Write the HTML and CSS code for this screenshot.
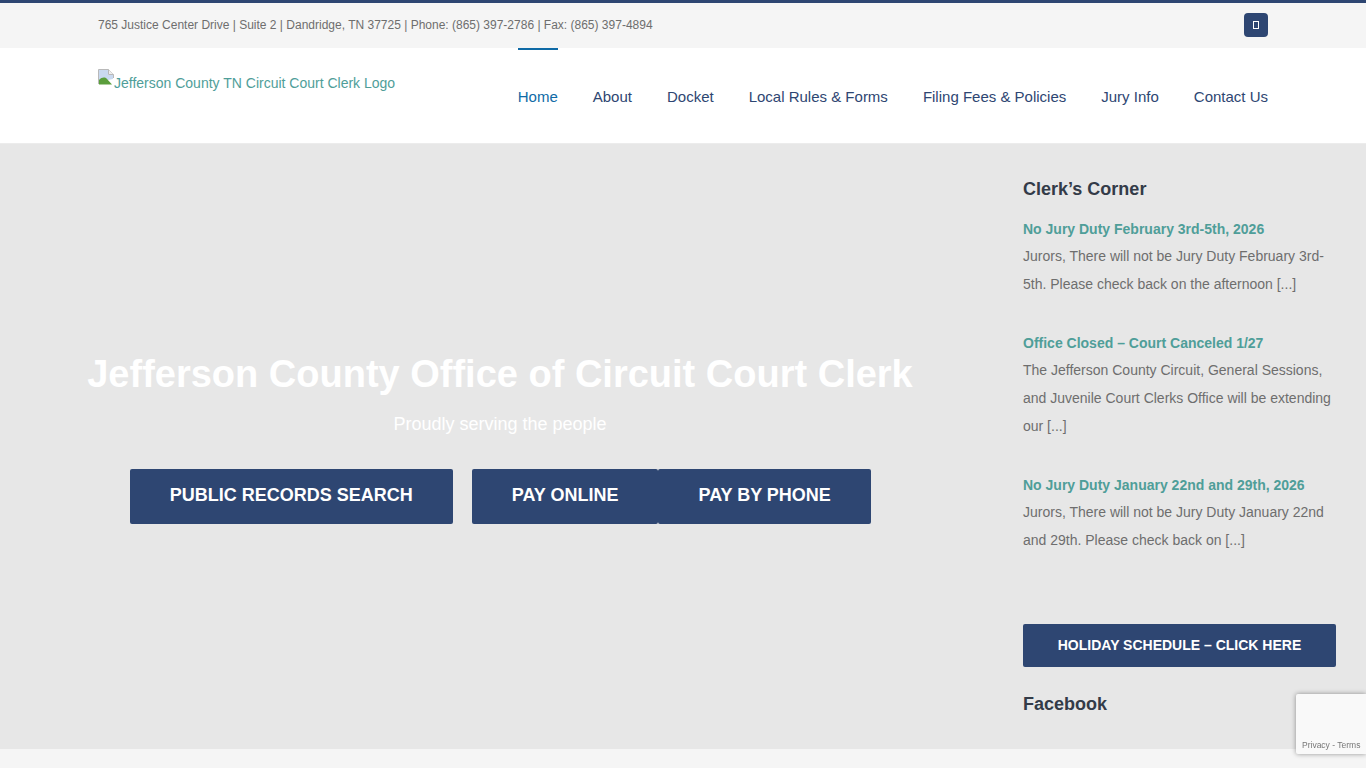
FILE: index.html
```html
<!DOCTYPE html>
<html lang="en">
<head>
    <meta charset="UTF-8">
    <title>Jefferson County TN Circuit Court Clerk</title>
    <meta name="viewport" content="width=device-width, initial-scale=1">
    <link rel="stylesheet" href="styles.css">
</head>
<body>
    <div class="top-bar">
        <div class="top-address">765 Justice Center Drive | Suite 2 | Dandridge, TN 37725 | Phone: (865) 397-2786 | Fax: (865) 397-4894</div>
        <a class="social-box" href="#"><span class="missing-glyph"></span></a>
    </div>

    <header class="site-header">
        <a class="logo" href="#">
            <svg class="broken-img" width="16" height="16" viewBox="0 0 16 16">
                <path d="M1 1H10V6H15V10L1 13Z" fill="#c9d9f0"/>
                <path d="M0.5 15V0.5H10.5L15.5 5.5V9" fill="none" stroke="#b9b9b9"/>
                <path d="M10.5 0.5V5.5H15.5" fill="#eee" stroke="#b9b9b9"/>
                <path d="M1 15.5V11C4 8 7 8 9 10L14 15.5Z" fill="#5b9e3c"/>
            </svg>Jefferson County TN Circuit Court Clerk Logo
        </a>
        <nav class="main-nav">
            <a class="nav-link active" href="#">Home</a>
            <a class="nav-link" href="#">About</a>
            <a class="nav-link" href="#">Docket</a>
            <a class="nav-link" href="#">Local Rules &amp; Forms</a>
            <a class="nav-link" href="#">Filing Fees &amp; Policies</a>
            <a class="nav-link" href="#">Jury Info</a>
            <a class="nav-link" href="#">Contact Us</a>
        </nav>
    </header>

    <div class="content">
        <main class="hero">
            <h1>Jefferson County Office of Circuit Court Clerk</h1>
            <p class="hero-sub">Proudly serving the people</p>
            <div class="hero-buttons">
                <a class="btn btn-search" href="#">PUBLIC RECORDS SEARCH</a>
                <a class="btn" href="#">PAY ONLINE</a>
                <a class="btn" href="#">PAY BY PHONE</a>
            </div>
        </main>

        <aside class="sidebar">
            <h2>Clerk’s Corner</h2>
            <div class="post">
                <a class="post-title" href="#">No Jury Duty February 3rd-5th, 2026</a>
                <p>Jurors, There will not be Jury Duty February 3rd-5th. Please check back on the afternoon [...]</p>
            </div>
            <div class="post">
                <a class="post-title" href="#">Office Closed – Court Canceled 1/27</a>
                <p>The Jefferson County Circuit, General Sessions, and Juvenile Court Clerks Office will be extending our [...]</p>
            </div>
            <div class="post">
                <a class="post-title" href="#">No Jury Duty January 22nd and 29th, 2026</a>
                <p>Jurors, There will not be Jury Duty January 22nd and 29th. Please check back on [...]</p>
            </div>
            <a class="holiday-btn" href="#">HOLIDAY SCHEDULE – CLICK HERE</a>
            <h2 class="facebook-title">Facebook</h2>
        </aside>
    </div>

    <div class="recaptcha"><span class="recaptcha-links">Privacy - Terms</span></div>
</body>
</html>
```

FILE: styles.css
```css
html, body {
    height: 100%;
}
body {
    font-family: "Liberation Sans", Arial, sans-serif;
    background: #f5f5f5;
    margin: 0;
    overflow: hidden;
}
a {
    text-decoration: none;
}

.top-bar {
    display: flex;
    justify-content: space-between;
    align-items: center;
    box-sizing: border-box;
    height: 48px;
    padding: 0 98px 1px;
    background: #f5f5f5;
    border-top: 3px solid #2e4672;
}
.top-address {
    font-size: 12px;
    color: #6e6e6e;
}
.social-box {
    display: flex;
    align-items: center;
    justify-content: center;
    width: 24px;
    height: 24px;
    border-radius: 4px;
    background: #2e4672;
}
.missing-glyph {
    box-sizing: border-box;
    width: 6px;
    height: 8px;
    border: 1px solid #fff;
}

.site-header {
    display: flex;
    justify-content: space-between;
    box-sizing: border-box;
    height: 96px;
    padding: 0 98px;
    background: #fff;
    border-bottom: 1px solid #ececec;
}
.logo {
    display: block;
    margin-top: 21px;
    font-size: 14px;
    line-height: 29px;
    height: 29px;
    color: #4f9e99;
}
.broken-img {
    vertical-align: top;
}
.main-nav {
    display: flex;
    gap: 35px;
}
.nav-link {
    display: flex;
    align-items: center;
    box-sizing: border-box;
    height: 95px;
    border-top: 2px solid transparent;
    font-size: 15px;
    color: #2e4672;
}
.nav-link.active {
    border-top-color: #0f6aa6;
    color: #0f6aa6;
}

.content {
    display: flex;
    box-sizing: border-box;
    height: 605px;
    background: #e7e7e7;
}
.hero {
    display: flex;
    flex-direction: column;
    align-items: center;
    justify-content: center;
    width: 1000px;
    flex-shrink: 0;
    padding-bottom: 19px;
    box-sizing: border-box;
}
.hero h1 {
    margin: 0;
    font-size: 38px;
    line-height: 46px;
    color: #fff;
    white-space: nowrap;
}
.hero-sub {
    margin: 14px 0 0;
    font-size: 18px;
    line-height: 26px;
    color: #fff;
}
.hero-buttons {
    display: flex;
    margin: 32px 0 0 0.6px;
}
.btn {
    display: block;
    padding: 0 40px;
    height: 55px;
    line-height: 53px;
    font-size: 18px;
    font-weight: bold;
    color: #fff;
    background: #2e4672;
    border-radius: 2px;
}
.btn-search {
    margin-right: 19px;
}

.sidebar {
    box-sizing: border-box;
    width: 366px;
    padding: 34px 30px 0 23px;
}
.sidebar h2 {
    margin: 0;
    font-size: 18px;
    line-height: 22px;
    color: #333b48;
}
.post {
    margin-bottom: 32px;
}
.sidebar h2 + .post {
    margin-top: 16px;
}
.post-title {
    display: block;
    font-size: 14px;
    font-weight: bold;
    line-height: 26px;
    color: #4f9e99;
}
.post p {
    margin: 0;
    font-size: 14px;
    line-height: 28px;
    color: #6e6e6e;
}
.holiday-btn {
    display: block;
    height: 43px;
    margin-top: 70px;
    line-height: 42px;
    text-align: center;
    font-size: 14px;
    font-weight: bold;
    color: #fff;
    background: #2e4672;
    border-radius: 2px;
}
.sidebar .facebook-title {
    margin-top: 26px;
}

.recaptcha {
    position: fixed;
    right: 0;
    top: 694px;
    width: 70px;
    height: 60px;
    background: #f9f9f9;
    border-radius: 2px 0 0 2px;
    box-shadow: 0 0 5px rgba(0,0,0,0.4);
}
.recaptcha-links {
    position: absolute;
    left: 6px;
    bottom: 4px;
    font-size: 8.5px;
    color: #777;
    white-space: nowrap;
}
```
